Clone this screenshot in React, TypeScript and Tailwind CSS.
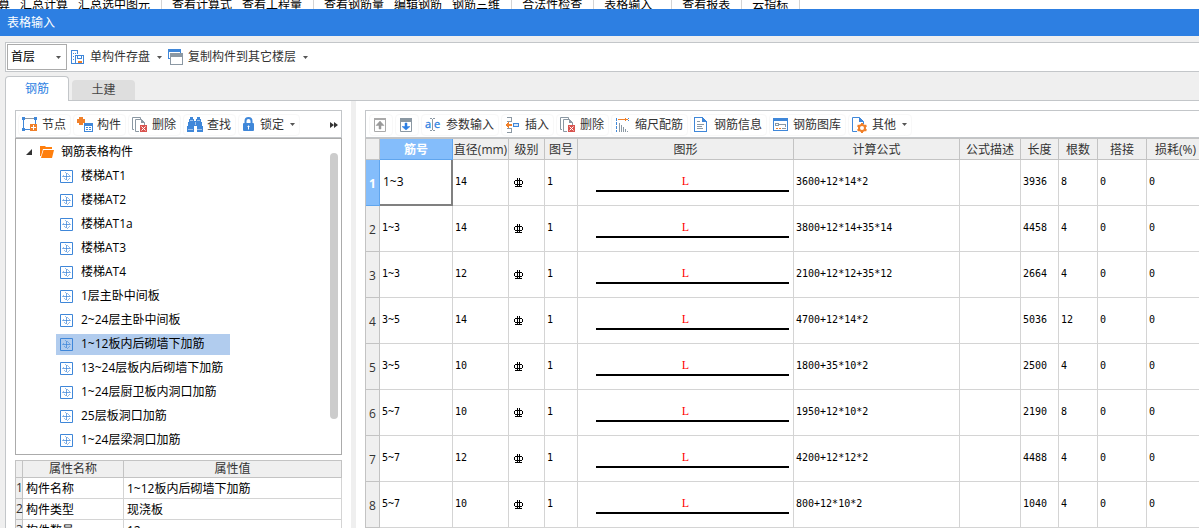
import React, { useState } from "react";

type IconProps = { className?: string };

const BLUE = "#3f87d9";
const ORANGE = "#f0802a";
const GRAY = "#8b98a3";

const Caret = ({ className = "" }: IconProps) => (
  <svg className={`shrink-0 ${className}`} width="5" height="3" viewBox="0 0 5 3">
    <path d="M0 0h5L2.5 3z" fill="#555" />
  </svg>
);

const SaveUnitIcon = () => (
  <svg width="14" height="14" viewBox="0 0 14 14" fill="none" shapeRendering="crispEdges">
    <path d="M4 13.5H.5V.5h6V4" stroke={BLUE} />
    <path d="M2 3.5h1M2 6.5h1M2 9.5h1M4 3.5h1" stroke={BLUE} />
    <path d="M4.500 5.500h8v8h-8z" stroke={BLUE} fill="#fff" />
    <path d="M6.500 5.500h4v3h-4z" fill="#fff" stroke={BLUE} />
    <path d="M7 11h4v2H7z" fill={ORANGE} />
  </svg>
);

const CopyWindowsIcon = () => (
  <svg width="16" height="16" viewBox="0 0 16 16" shapeRendering="crispEdges">
    <path d="M.5.5h12v9H.5z" fill="#fff" stroke={BLUE} />
    <path d="M0 0h13v3H0z" fill={BLUE} />
    <path d="M2.500 4.500h12v11h-12z" fill="#fff" stroke={GRAY} />
    <path d="M2 4h13v4H2z" fill={GRAY} />
  </svg>
);

const NodeIcon = () => (
  <svg width="16" height="16" viewBox="0 0 16 16" fill="none" shapeRendering="crispEdges">
    <path d="M1.500 12V2M3 1.500h9M13.500 2v6" stroke={GRAY} />
    <path d="M1.500 3v8M3 12.500h6M13.500 3v5" stroke={BLUE} />
    <path d="M0 0h3v3H0zM12 0h3v3h-3zM0 11h3v3H0z" fill={BLUE} />
    <path d="M8 7h7v7H8z" fill={ORANGE} />
    <path d="M9 10.500h5M11.500 8v5" stroke="#fff" />
  </svg>
);

const ComponentIcon = () => (
  <svg width="16" height="16" viewBox="0 0 16 16" fill="none" shapeRendering="crispEdges">
    <path d="M2 0h4v2h2v4H6v2H2V6H0V2h2z" fill={ORANGE} />
    <path d="M7.500 6.500h8v8h-8z" stroke={BLUE} fill="#fff" />
    <path d="M7 6h9v3H7z" fill={BLUE} />
    <path d="M9 10.500h2M12 10.500h2M9 12.500h2M12 12.500h2" stroke={BLUE} />
  </svg>
);

const DeleteIcon = () => (
  <svg width="16" height="16" viewBox="0 0 16 16" fill="none">
    <path d="M2 12.500H.5V.5h8V2" stroke={GRAY} />
    <path d="M7 14.500H3.500v-12h6l3 3V8" stroke={GRAY} />
    <path d="M9 2v4h4z" fill={GRAY} />
    <path d="M8 8h7v7H8z" fill="#d9534f" />
    <path d="M9.500 9.500l4 4m0-4l-4 4" stroke="#fff" />
  </svg>
);

const BinocularsIcon = () => (
  <svg width="16" height="16" viewBox="0 0 16 16" fill={BLUE} shapeRendering="crispEdges">
    <path d="M3 0h3v2h1v2h2V2h1V0h3v2h1v3h1v4h1v6h-6V9H7v6H0V9h1V5h1V2h1z" />
    <path d="M1 12.500h5M10 12.500h5M3 3.500h3M10 3.500h3M8 5v3" stroke="#fff" strokeOpacity=".5" />
  </svg>
);

const LockIcon = () => (
  <svg width="14" height="15" viewBox="0 0 14 15" fill="none">
    <path d="M3.500 7V4a3 3 0 016 0v3" stroke={BLUE} strokeWidth="2" />
    <rect x="1" y="6" width="11" height="8" rx="1" fill={BLUE} />
    <path d="M6.500 8.500v4M5.500 9.500h2" stroke="#fff" />
  </svg>
);

const FolderIcon = () => (
  <svg width="14" height="12" viewBox="0 0 14 12" fill="#ff7f0e">
    <path d="M0 0h5l1 1h6v2H3L1 10H0z" />
    <path d="M3.500 4H14l-2 8H1z" />
  </svg>
);

const TreeItemIcon = () => (
  <svg className="shrink-0" width="13" height="13" viewBox="0 0 13 13" fill="none" stroke={BLUE}>
    <path d="M.5.5h12v12H.5z" />
    <path d="M3 6.500h7M6.500 3v7" strokeOpacity=".75" />
    <path
      d="M5 2.500h1M7 3.500h1M8 4.500h1M9 5.500h1M3 5.500h1M2 6.500h1M10 6.500h1M4 8.500h1M5 9.500h1M7 10.500h1M8 9.500h1M9 8.500h1"
      strokeOpacity=".55"
    />
  </svg>
);

const MoveUpIcon = () => (
  <svg width="14" height="16" viewBox="0 0 14 16" fill="none">
    <path d="M1.500 1.500h11v13h-11z" stroke="#aaa" />
    <path d="M1 1h12v2H1z" fill="#aaa" />
    <path d="M7 4l4 4.500H8V12H6V8.500H3z" fill="#999" stroke="#999" strokeWidth=".5" />
  </svg>
);

const MoveDownIcon = () => (
  <svg width="14" height="16" viewBox="0 0 14 16" fill="none">
    <path d="M1.500 1.500h11v13h-11z" stroke={GRAY} />
    <path d="M1 1h12v4H1z" fill={GRAY} />
    <path d="M7 13L3 9.500h3V6h2v3.500h3z" fill="#2d7fe2" stroke="#2d7fe2" strokeWidth=".5" />
  </svg>
);

// letters are plain text, only the caret between them is drawn
const ParamIcon = () => (
  <svg width="17" height="16" viewBox="0 0 17 16" fill="none">
    <text x="0" y="11" fontSize="11" fontFamily="Open Sans, sans-serif" fill="#2d7fe2" stroke="#2d7fe2" strokeWidth=".3">a</text>
    <text x="9" y="11" fontSize="11" fontFamily="Open Sans, sans-serif" fill="#2d7fe2" stroke="#2d7fe2" strokeWidth=".3">e</text>
    <path d="M5 1.500h2M8 1.500h2M7.500 2v11M5 13.500h2M8 13.500h2" stroke={GRAY} />
  </svg>
);

const InsertIcon = () => (
  <svg width="16" height="16" viewBox="0 0 16 16" fill="none" shapeRendering="crispEdges">
    <path d="M2 .5h4.500v4H2M2 11.500h4.500v4H2" stroke={GRAY} />
    <path d="M0 8l4-3v2h3v2H4v2z" fill={ORANGE} />
    <path d="M8.500 6.500h5v3h-5z" stroke={BLUE} fill="#d9e9fa" />
  </svg>
);

const ScaleRebarIcon = () => (
  <svg width="16" height="16" viewBox="0 0 16 16" fill="none" shapeRendering="crispEdges">
    <path d="M1.500 1v14" stroke={BLUE} strokeDasharray="3 1" />
    <path d="M13.500 1v4" stroke={BLUE} strokeDasharray="1 1" />
    <path d="M3 2.500h8" stroke={ORANGE} />
    <path d="M10 1l3 1.500L10 4z" fill={ORANGE} />
    <path d="M4.500 6v9M6.500 8v7M8.500 10v5M10.500 12v3M12.500 14v1" stroke={GRAY} />
  </svg>
);

const RebarInfoIcon = () => (
  <svg width="16" height="16" viewBox="0 0 16 16" fill="none" shapeRendering="crispEdges">
    <path d="M.5.5h8l4 4v10H.5z" stroke={BLUE} fill="#fff" />
    <path d="M8 0v5h5z" fill={BLUE} />
    <path d="M3 4.500h3M3 7.500h7M3 9.500h5M3 11.500h6" stroke={GRAY} />
  </svg>
);

const RebarLibraryIcon = () => (
  <svg width="16" height="16" viewBox="0 0 16 16" fill="none" shapeRendering="crispEdges">
    <path d="M.5 1.500h14v12H.5z" stroke={BLUE} fill="#fff" />
    <path d="M0 1h15v3H0z" fill={BLUE} />
    <path d="M2.500 9V6.500h3v2H3M5 7.500h7.500V10" stroke={GRAY} />
    <path d="M3 11.500h2M6 11.500h2" stroke={ORANGE} />
    <path d="M9 11.500h4" stroke={GRAY} />
  </svg>
);

const OtherIcon = () => (
  <svg width="16" height="16" viewBox="0 0 16 16" fill="none">
    <path d="M5 14.500H.5V.5h7l4 4V7" stroke={BLUE} />
    <path d="M7 0v5h5z" fill={BLUE} />
    <path d="M10 6v2M10 14v2M5.500 8.500l2 1M12.500 12.500l2 1M14.500 8.500l-2 1M7.500 12.500l-2 1" stroke={ORANGE} strokeWidth="2" />
    <circle cx="10" cy="11" r="3" stroke={ORANGE} strokeWidth="2" fill="#fff" />
  </svg>
);

// HRB400 rebar grade mark
const GradeMark = () => (
  <svg width="9" height="10" viewBox="0 0 9 10" fill="none" stroke="#000" role="img" aria-label="HRB400">
    <path d="M1 2.500h7M1 6.500h7M.5 3v3M8.500 3v3M3.500 0v9M5.500 0v9M1 8.500h7" />
  </svg>
);

const ribbon: string[][] = [
  ["算", "汇总计算", "汇总选中图元"],
  ["查看计算式", "查看工程量"],
  ["查看钢筋量", "编辑钢筋", "钢筋三维"],
  ["合法性检查"],
  ["表格输入"],
  ["查看报表"],
  ["云指标"],
];

const components = [
  "楼梯AT1",
  "楼梯AT2",
  "楼梯AT1a",
  "楼梯AT3",
  "楼梯AT4",
  "1层主卧中间板",
  "2~24层主卧中间板",
  "1~12板内后砌墙下加筋",
  "13~24层板内后砌墙下加筋",
  "1~24层厨卫板内洞口加筋",
  "25层板洞口加筋",
  "1~24层梁洞口加筋",
];

const properties = [
  ["构件名称", "1~12板内后砌墙下加筋"],
  ["构件类型", "现浇板"],
  ["构件数量", "12"],
];

const columns = [
  { name: "筋号", width: "w-[73px]" },
  { name: "直径(mm)", width: "w-[56px]" },
  { name: "级别", width: "w-[36px]" },
  { name: "图号", width: "w-[33px]" },
  { name: "图形", width: "w-[216px]" },
  { name: "计算公式", width: "w-[166px]" },
  { name: "公式描述", width: "w-[61px]" },
  { name: "长度", width: "w-[38px]" },
  { name: "根数", width: "w-[39px]" },
  { name: "搭接", width: "w-[49px]" },
  { name: "损耗(%)", width: "" },
];

const rebars = [
  { no: "1~3", diameter: 14, formula: "3600+12*14*2", length: 3936, count: 8 },
  { no: "1~3", diameter: 14, formula: "3800+12*14+35*14", length: 4458, count: 4 },
  { no: "1~3", diameter: 12, formula: "2100+12*12+35*12", length: 2664, count: 4 },
  { no: "3~5", diameter: 14, formula: "4700+12*14*2", length: 5036, count: 12 },
  { no: "3~5", diameter: 10, formula: "1800+35*10*2", length: 2500, count: 4 },
  { no: "5~7", diameter: 10, formula: "1950+12*10*2", length: 2190, count: 8 },
  { no: "5~7", diameter: 12, formula: "4200+12*12*2", length: 4488, count: 4 },
  { no: "5~7", diameter: 10, formula: "800+12*10*2", length: 1040, count: 4 },
];

const ToolButton = ({
  icon,
  label,
  title,
  caret,
}: {
  icon: React.ReactNode;
  label?: string;
  title?: string;
  caret?: boolean;
}) => (
  <button
    aria-label={label ?? title}
    className="flex h-[22px] min-w-6 shrink-0 items-center gap-1 rounded-sm border border-[#f8f8f8] pr-1 pl-[3px] text-[#333] hover:bg-blue-50"
  >
    {icon}
    {label && <span>{label}</span>}
    {caret && <Caret className="ml-[2px]" />}
  </button>
);

const Cell = ({ children }: { children?: React.ReactNode }) => (
  <td className="border-r border-b border-[#d4d4d4] px-[2px] pb-px align-middle last:border-r-0">{children}</td>
);

const Ribbon = () => (
  <nav className="-ml-[2px] flex h-[9px] shrink-0 items-start gap-[10px] overflow-hidden bg-white text-black">
    {ribbon.map((group, i) => (
      <React.Fragment key={i}>
        {group.map((name) => (
          <button key={name} className={`shrink-0 leading-[10px] ${name === "表格输入" ? "pr-2" : ""}`}>
            {name}
          </button>
        ))}
        <span className="ml-px h-full w-px shrink-0 bg-[#d4d4d4]" />
      </React.Fragment>
    ))}
  </nav>
);

const ComponentTree = () => {
  const [selected, setSelected] = useState(7);

  return (
    <div className="flex shrink-0 border border-[#ababab] pt-px pb-[2px] text-black">
      <ul className="min-w-0 flex-1">
        <li className="flex h-6 items-center pl-[10px]">
          <svg width="6" height="6" viewBox="0 0 6 6">
            <path d="M6 0v6H0z" fill="#333" />
          </svg>
          <span className="ml-2 mr-[7px]">
            <FolderIcon />
          </span>
          钢筋表格构件
        </li>
        {components.map((name, i) => (
          <li key={name} className="flex h-6 items-center pl-10">
            <button
              onClick={() => setSelected(i)}
              className={`flex h-[21px] items-center gap-2 pl-1 text-left ${
                i === selected ? "w-[174px] bg-[#b1ccee]" : ""
              }`}
            >
              <TreeItemIcon />
              {name}
            </button>
          </li>
        ))}
      </ul>
      <div className="mt-[13px] mr-[3px] mb-[33px] w-2 rounded-full bg-[#ccc]" />
    </div>
  );
};

const PropertyTable = () => (
  <table className="mt-[5px] w-full shrink-0 table-fixed border-separate border-spacing-0 border-t border-l border-[#c3c3c3] text-black">
    <thead>
      <tr className="h-[17px] bg-[#efefef] leading-4 text-[#333]">
        <th className="w-[7px] border-r border-b border-[#c3c3c3]" />
        <th className="w-[101px] border-r border-b border-[#c3c3c3] font-normal">属性名称</th>
        <th className="border-r border-b border-[#c3c3c3] font-normal">属性值</th>
      </tr>
    </thead>
    <tbody>
      {properties.map(([name, value], i) => (
        <tr key={name} className="h-[21px]">
          <th className="border-r border-b border-[#c3c3c3] bg-[#efefef] font-normal text-[#333]">{i + 1}</th>
          <td className="border-r border-b border-[#d4d4d4] pt-px pl-[3px]">{name}</td>
          <td className="border-r border-b border-[#d4d4d4] pt-px pl-[3px]">{value}</td>
        </tr>
      ))}
    </tbody>
  </table>
);

const RebarTable = () => (
  <table className="w-full table-fixed border-separate border-spacing-0 border-t border-l border-[#c3c3c3] text-black">
    <thead>
      <tr className="h-[21px] bg-[#efefef] text-[#333]">
        <th className="w-[14px] border-r border-b border-[#c3c3c3]" />
        {columns.map((col, i) => (
          <th
            key={col.name}
            className={`border-b pt-px whitespace-nowrap ${col.width} ${
              i === 0
                ? "border-r border-[#5fa5ee] bg-[#84bdfb] font-bold text-white"
                : i === columns.length - 1
                  ? "border-[#c3c3c3] pl-2 text-left font-normal"
                  : "border-r border-[#c3c3c3] font-normal"
            }`}
          >
            {col.name}
          </th>
        ))}
      </tr>
    </thead>
    <tbody className="font-['DejaVu_Sans_Mono','Liberation_Mono',monospace] text-[10px]">
      {rebars.map((bar, i) => (
        <tr key={i} className="h-[46px]">
          <th
            className={`border-r border-b pt-[2px] font-['Open_Sans','Noto_Sans_CJK_SC',sans-serif] text-xs ${
              i === 0
                ? "border-[#5fa5ee] bg-[#84bdfb] font-bold text-white"
                : "border-[#c3c3c3] bg-[#efefef] font-normal text-[#333]"
            }`}
          >
            {i + 1}
          </th>
          {i === 0 ? (
            <td className="border-r-2 border-b-2 border-[#808080] pl-[3px] font-['Open_Sans','Noto_Sans_CJK_SC',sans-serif] text-xs">
              {bar.no}
            </td>
          ) : (
            <Cell>{bar.no}</Cell>
          )}
          <Cell>{bar.diameter}</Cell>
          <td className="border-r border-b border-[#d4d4d4] pl-[5px]">
            <GradeMark />
          </td>
          <Cell>1</Cell>
          <td className="border-r border-b border-[#d4d4d4] pb-px text-center font-['Liberation_Serif',serif] text-xs leading-4 text-[#f00]">
            L
            <div className="mt-px mr-1 ml-[18px] h-[2px] bg-black" />
          </td>
          <Cell>{bar.formula}</Cell>
          <Cell />
          <Cell>{bar.length}</Cell>
          <Cell>{bar.count}</Cell>
          <Cell>0</Cell>
          <Cell>0</Cell>
        </tr>
      ))}
    </tbody>
  </table>
);

export default function App() {
  const [tab, setTab] = useState("钢筋");

  return (
    <div className="flex h-screen flex-col overflow-hidden bg-[#efefef] font-['Open_Sans','Noto_Sans_CJK_SC',sans-serif] text-xs">
      <Ribbon />
      <header className="flex h-[27px] shrink-0 items-center bg-[#2d7fe2] pl-[7px] text-white">表格输入</header>

      <div className="mt-[6px] ml-[5px] flex h-[30px] shrink-0 items-center border-y border-l border-[#c3c6c9] bg-white pl-px text-[#333]">
        <div className="relative">
          <select
            aria-label="楼层"
            className="h-[26px] w-[60px] appearance-none border border-[#ababab] bg-white pl-[3px] text-black"
          >
            <option>首层</option>
          </select>
          <Caret className="pointer-events-none absolute top-3 right-[6px]" />
        </div>
        <button className="ml-1 flex items-center gap-[5px]">
          <SaveUnitIcon />
          单构件存盘
          <Caret className="ml-[2px]" />
        </button>
        <button className="ml-[6px] flex items-center gap-1">
          <CopyWindowsIcon />
          复制构件到其它楼层
          <Caret className="ml-[3px]" />
        </button>
      </div>

      <div role="tablist" className="ml-[5px] flex h-[29px] shrink-0 items-end gap-[3px] border-b border-[#c3c6c9]">
        {["钢筋", "土建"].map((name) => (
          <button
            key={name}
            role="tab"
            aria-selected={tab === name}
            onClick={() => setTab(name)}
            className={
              tab === name
                ? "-mb-px h-[25px] w-16 rounded-t-sm border border-b-0 border-[#c3c6c9] bg-white text-[#2d7fe2]"
                : "h-5 w-[63px] rounded-t-sm bg-[#dedede] text-[#444]"
            }
          >
            {name}
          </button>
        ))}
      </div>

      <main className="ml-[5px] flex min-h-0 flex-1 border-l border-[#c3c6c9] bg-white">
        <section className="flex w-[345px] shrink-0 flex-col px-[9px] pt-[9px]">
          <div className="flex h-7 shrink-0 items-center gap-[2px] border border-[#c3c6c9] pt-px pl-[2px]">
            <ToolButton icon={<NodeIcon />} label="节点" />
            <ToolButton icon={<ComponentIcon />} label="构件" />
            <ToolButton icon={<DeleteIcon />} label="删除" />
            <ToolButton icon={<BinocularsIcon />} label="查找" />
            <ToolButton icon={<LockIcon />} label="锁定" caret />
            <button aria-label="更多" className="mr-[3px] ml-auto">
              <svg width="8" height="6" viewBox="0 0 8 6" fill="#333">
                <path d="M0 0l4 3-4 3zM4 0l4 3-4 3z" />
              </svg>
            </button>
          </div>
          <ComponentTree />
          <PropertyTable />
        </section>
        <div className="w-[5px] shrink-0 bg-[#efefef]" />
        <section className="min-w-0 flex-1 pt-[9px] pl-[9px]">
          <div className="flex h-7 items-center gap-[2px] border-y border-l border-[#c3c6c9] pt-px pl-[3px]">
            <ToolButton icon={<MoveUpIcon />} title="上移" />
            <ToolButton icon={<MoveDownIcon />} title="下移" />
            <ToolButton icon={<ParamIcon />} label="参数输入" />
            <ToolButton icon={<InsertIcon />} label="插入" />
            <ToolButton icon={<DeleteIcon />} label="删除" />
            <ToolButton icon={<ScaleRebarIcon />} label="缩尺配筋" />
            <ToolButton icon={<RebarInfoIcon />} label="钢筋信息" />
            <ToolButton icon={<RebarLibraryIcon />} label="钢筋图库" />
            <ToolButton icon={<OtherIcon />} label="其他" caret />
          </div>
          <RebarTable />
        </section>
      </main>
    </div>
  );
}
